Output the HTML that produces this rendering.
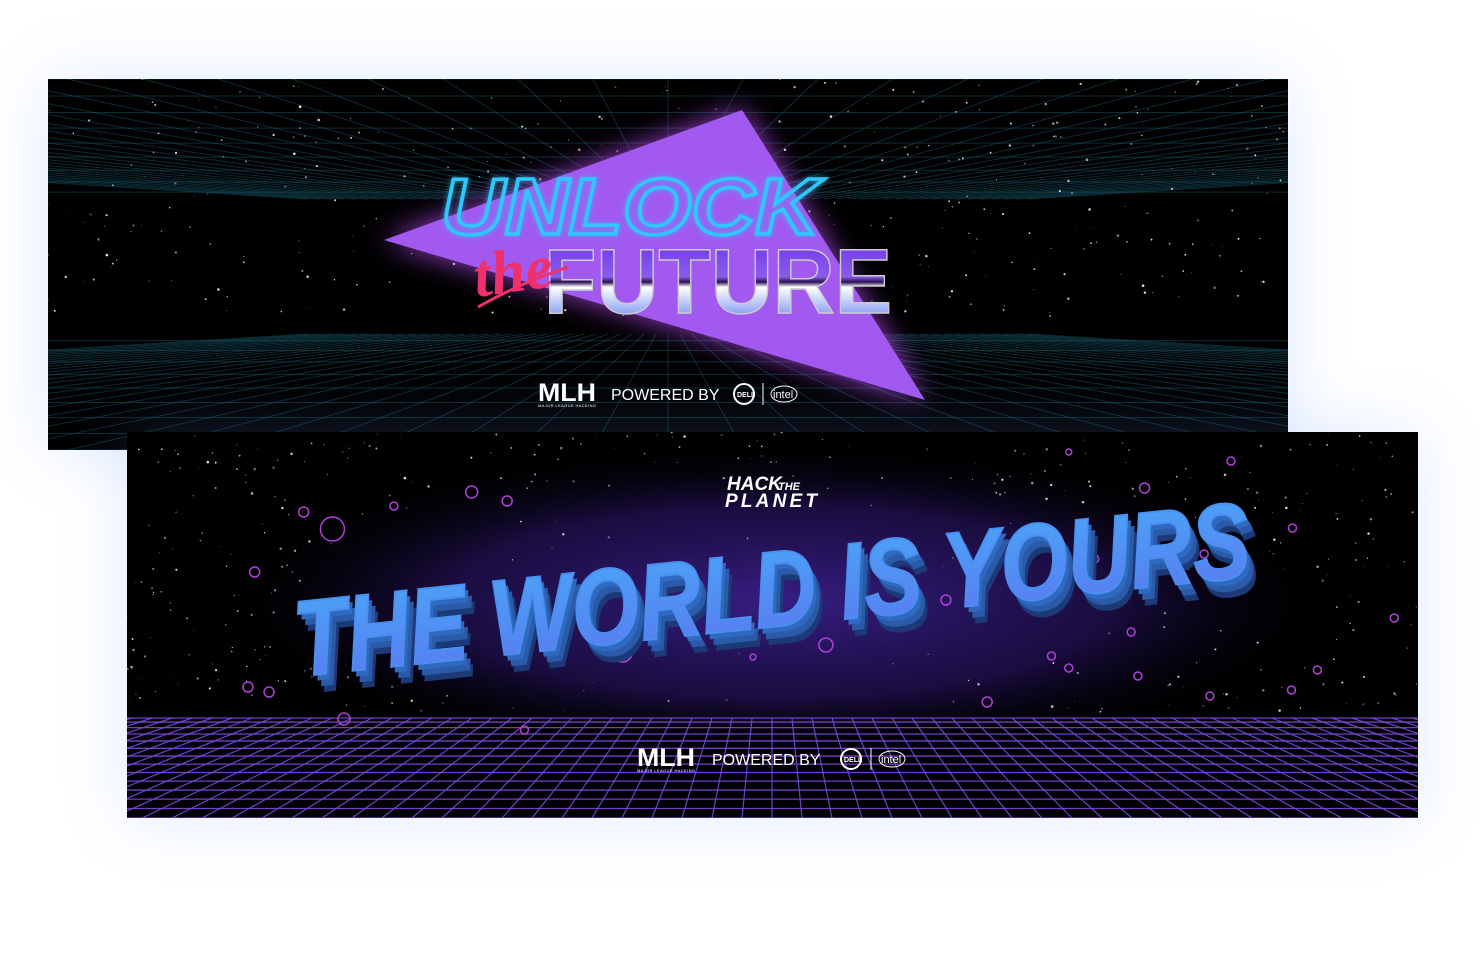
<!DOCTYPE html>
<html><head><meta charset="utf-8"><style>
html,body{margin:0;padding:0;background:#fff;width:1480px;height:954px;overflow:hidden;position:relative;font-family:"Liberation Sans",sans-serif}
.b{position:absolute;background:#000;box-shadow:0 0 60px rgba(110,160,255,0.22)}
svg{display:block}
</style></head><body>
<div class="b" style="left:48px;top:79px;width:1240px;height:371px">
<svg id="s1" width="1240" height="371" viewBox="0 0 1240 371">
<defs>
<linearGradient id="fg" x1="0" y1="0" x2="0" y2="1"><stop offset="0" stop-color="#6a2ef0"/><stop offset="0.45" stop-color="#8a5ce8"/><stop offset="0.5" stop-color="#2a1050"/><stop offset="0.55" stop-color="#ffffff"/><stop offset="1" stop-color="#3a5ef0"/></linearGradient>
<filter id="bl"><feGaussianBlur stdDeviation="14"/></filter>
<filter id="gl"><feGaussianBlur stdDeviation="3"/></filter>
</defs>
<g id="g1"></g>
<g id="st1"></g>
<polygon points="336,161 694,31 877,321" fill="#c050ff" filter="url(#bl)" opacity="0.8"/>
<polygon points="336,161 694,31 877,321" fill="#a259f0"/>
<text x="393" y="155" font-family="Liberation Sans" font-weight="bold" font-style="italic" font-size="80" fill="none" stroke="#2ec8ff" stroke-width="3.5" textLength="378" lengthAdjust="spacingAndGlyphs" filter="url(#gl)" opacity="0.7">UNLOCK</text>
<text x="393" y="155" font-family="Liberation Sans" font-weight="bold" font-style="italic" font-size="80" fill="none" stroke="#2ec8ff" stroke-width="3.5" textLength="378" lengthAdjust="spacingAndGlyphs">UNLOCK</text>
<text x="496" y="234" font-family="Liberation Sans" font-weight="bold" font-size="92" fill="url(#fg)" stroke="#ccc" stroke-width="1.5" textLength="348" lengthAdjust="spacingAndGlyphs">FUTURE</text>
<text x="425" y="212" font-family="Liberation Serif" font-style="italic" font-weight="bold" font-size="62" fill="#f0306a" transform="rotate(-8 470 190)">the</text>
<path d="M430 228 Q470 205 520 188" stroke="#f0306a" stroke-width="3" fill="none"/>
<g fill="#fff">
<text x="490" y="322" font-weight="bold" font-size="25" textLength="58" lengthAdjust="spacingAndGlyphs">MLH</text>
<text x="490" y="328" font-size="4" textLength="58">MAJOR LEAGUE HACKING</text>
<text x="563" y="321" font-size="16">POWERED BY</text>
</g>
<circle cx="696" cy="315" r="10" fill="none" stroke="#fff" stroke-width="2"/><text x="689" y="318" font-size="7" fill="#fff" font-weight="bold">DELL</text>
<line x1="715" y1="304" x2="715" y2="326" stroke="#fff"/>
<ellipse cx="736" cy="315" rx="13" ry="8" fill="none" stroke="#fff" stroke-width="1"/><text x="725" y="319" font-size="11" fill="#fff">intel</text>
</svg></div>

<div class="b" style="left:127px;top:432px;width:1291px;height:386px">
<svg id="s2" width="1291" height="386" viewBox="0 0 1291 386">
<defs>
<radialGradient id="pg" cx="0.5" cy="0.5" r="0.5"><stop offset="0" stop-color="#3a1f8a" stop-opacity="0.95"/><stop offset="0.6" stop-color="#24125a" stop-opacity="0.7"/><stop offset="1" stop-color="#000" stop-opacity="0"/></radialGradient>
<linearGradient id="wg" x1="0" y1="0" x2="0" y2="1"><stop offset="0" stop-color="#4aa8f8"/><stop offset="1" stop-color="#5a78f0"/></linearGradient>
</defs>
<ellipse cx="650" cy="170" rx="560" ry="160" fill="url(#pg)"/>
<g id="st2"></g>
<g id="g2"></g>
<g id="circ" fill="none" stroke="#b040d8" stroke-width="1.5"></g>
<g transform="rotate(-6 650 150)" font-family="Liberation Sans" font-weight="bold" font-style="italic" font-size="108">
<text x="172" y="212" fill="#1c3a78" textLength="960" lengthAdjust="spacingAndGlyphs">THE WORLD IS YOURS</text>
<text x="170" y="206" fill="#2a5aa8" textLength="960" lengthAdjust="spacingAndGlyphs">THE WORLD IS YOURS</text>
<text x="167" y="200" fill="#2f6ac0" textLength="960" lengthAdjust="spacingAndGlyphs">THE WORLD IS YOURS</text>
<text x="164" y="194" fill="url(#wg)" stroke="#4a90f0" stroke-width="2" textLength="960" lengthAdjust="spacingAndGlyphs">THE WORLD IS YOURS</text>
</g>
<g fill="#fff" font-weight="bold" font-style="italic">
<text x="600" y="58" font-size="19">HACK</text><text x="651" y="58" font-size="11">THE</text>
<text x="598" y="75" font-size="19" textLength="92">PLANET</text>
</g>
<g fill="#fff">
<text x="510" y="334" font-weight="bold" font-size="25" textLength="58" lengthAdjust="spacingAndGlyphs">MLH</text>
<text x="510" y="340" font-size="4" textLength="58">MAJOR LEAGUE HACKING</text>
<text x="585" y="333" font-size="16">POWERED BY</text>
</g>
<circle cx="724" cy="327" r="10" fill="none" stroke="#fff" stroke-width="2"/><text x="717" y="330" font-size="7" fill="#fff" font-weight="bold">DELL</text>
<line x1="744" y1="316" x2="744" y2="338" stroke="#fff"/>
<ellipse cx="765" cy="327" rx="13" ry="8" fill="none" stroke="#fff"/><text x="754" y="331" font-size="11" fill="#fff">intel</text>
</svg></div>
<script>
var NS="http://www.w3.org/2000/svg";
function L(g,x1,y1,x2,y2,c,w,o){var l=document.createElementNS(NS,"line");l.setAttribute("x1",x1);l.setAttribute("y1",y1);l.setAttribute("x2",x2);l.setAttribute("y2",y2);l.setAttribute("stroke",c);l.setAttribute("stroke-width",w);if(o)l.setAttribute("opacity",o);g.appendChild(l);}
var seed=7;function r(){seed=(seed*16807)%2147483647;return seed/2147483647;}
var g1=document.getElementById("g1"),c1="#1b5f72";
for(var i=1;i<10;i++){var t=Math.pow(i/9,1.3);L(g1,0,120-t*120,1240,120-t*120,c1,1,0.45);L(g1,0,255+t*116,1240,255+t*116,c1,1,0.45);}
for(var i=-30;i<=30;i++){L(g1,620+i*12,120,620+i*75,0,c1,1,0.45);L(g1,620+i*12,255,620+i*75,371,c1,1,0.45);}
var g2=document.getElementById("g2"),c2="#7a48e0";
for(var i=0;i<14;i++){var t=Math.pow(i/13,1.25);L(g2,0,286+t*100,1291,286+t*100,c2,1.3,0.9);}
for(var i=-40;i<=40;i++){L(g2,645+i*20,286,645+i*30,386,c2,1.2,0.9);}
function stars(id,w,h,n,skip){var g=document.getElementById(id);for(var k=0;k<n;k++){var x=r()*w,y=r()*h;if(skip&&skip(x,y))continue;var c=document.createElementNS(NS,"circle");c.setAttribute("cx",x);c.setAttribute("cy",y);c.setAttribute("r",r()*1.0+0.3);c.setAttribute("fill","#fff");c.setAttribute("opacity",0.3+r()*0.6);g.appendChild(c);}}
stars("st1",1240,240,400);
stars("st2",1291,280,700,function(x,y){var dx=(x-650)/500,dy=(y-170)/120;return dx*dx+dy*dy<1&&r()<0.85;});
var cs=[[214,97,12],[133,140,5],[226,287,6],[126,255,5],[302,210,4],[184,80,5],[278,74,4],[359,60,6],[396,69,5],[516,220,10],[340,240,5],[421,212,3],[728,213,7],[853,168,5],[981,20,3],[1060,56,5],[1150,29,4],[1122,122,4],[1214,96,4],[1008,127,4],[1046,200,4],[1053,244,4],[1213,258,4],[1320,186,4],[981,236,4],[1128,264,4],[896,270,5],[963,224,4],[1240,238,4],[652,225,3],[414,298,4],[148,260,5]];
var cg=document.getElementById("circ");cs.forEach(function(a){var c=document.createElementNS(NS,"circle");c.setAttribute("cx",a[0]*0.96);c.setAttribute("cy",a[1]);c.setAttribute("r",a[2]);cg.appendChild(c);});
</script>
</body></html>
